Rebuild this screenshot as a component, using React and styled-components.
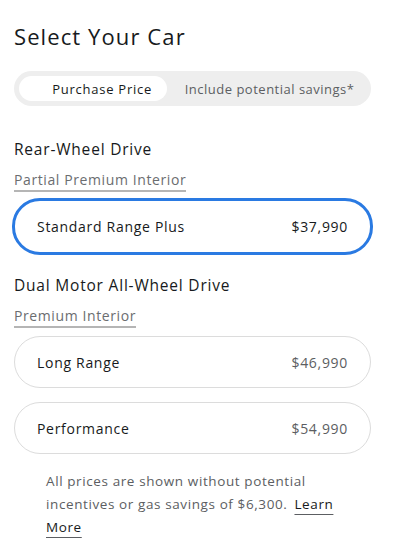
import React from "react";
import styled, { createGlobalStyle } from "styled-components";

const Global = createGlobalStyle`
  html, body { margin: 0; padding: 0; background: #fff; }
  body { font-family: "Open Sans", "Liberation Sans", sans-serif; color: #171a20; -webkit-font-smoothing: antialiased; }
`;

const Page = styled.div`
  width: 400px;
  padding: 20px 14px 0 14px;
  box-sizing: border-box;
  display: flex;
  flex-direction: column;
`;

const Title = styled.h1`
  margin: 0;
  font-size: 22px;
  font-weight: 400;
  line-height: 32px;
  letter-spacing: 1.1px;
  color: #171a20;
`;

const Toggle = styled.div`
  margin-top: 19px;
  width: 357px;
  height: 35px;
  box-sizing: border-box;
  padding: 5px;
  border-radius: 18px;
  background: #eeeeee;
  display: flex;
  align-items: center;
`;

const ToggleOption = styled.div`
  height: 25px;
  border-radius: 13px;
  display: flex;
  align-items: center;
  justify-content: center;
  font-size: 13px;
  letter-spacing: ${(p) => (p.$active ? "0.75px" : "0.5px")};
  white-space: nowrap;
  background: ${(p) => (p.$active ? "#fff" : "transparent")};
  color: ${(p) => (p.$active ? "#171a20" : "#5c5e62")};
  width: ${(p) => p.$w}px;
  padding-left: ${(p) => p.$pl || 0}px;
  box-sizing: border-box;
`;

const Section = styled.section`
  display: flex;
  flex-direction: column;
  align-items: flex-start;
  margin-top: ${(p) => p.$mt}px;
`;

const SectionTitle = styled.h2`
  margin: 0;
  font-size: 15.5px;
  font-weight: 500;
  line-height: 20px;
  letter-spacing: 0.8px;
  color: #171a20;
`;

const SubLink = styled.span`
  margin-top: 12px;
  font-size: 14px;
  line-height: 18px;
  color: #6b6d70;
  letter-spacing: 0.6px;
  border-bottom: 2px solid #b5b5b5;
  padding-bottom: 1px;
`;

const Options = styled.div`
  display: flex;
  flex-direction: column;
  gap: 14px;
  margin-top: ${(p) => p.$mt}px;
  width: 357px;
`;

const Option = styled.div`
  box-sizing: border-box;
  border-radius: 28px;
  border: ${(p) => (p.$selected ? "3px solid #2a7ae2" : "1px solid #dcdcdc")};
  margin: ${(p) => (p.$selected ? "0 -2px" : "0")};
  height: ${(p) => (p.$selected ? "57px" : "52px")};
  padding: 0 22px;
  display: flex;
  align-items: center;
  justify-content: space-between;
  font-size: 14px;
  letter-spacing: 0.7px;
`;

const OptName = styled.span`
  color: #171a20;
`;

const OptPrice = styled.span`
  color: ${(p) => (p.$selected ? "#171a20" : "#5c5e62")};
`;

const Note = styled.p`
  margin: 16px 0 0 32px;
  width: 310px;
  font-size: 13.5px;
  line-height: 23px;
  color: #5c5e62;
  letter-spacing: 0.6px;
`;

const Learn = styled.a`
  color: #171a20;
  margin-left: 7px;
  text-decoration: underline;
  text-decoration-color: #5c5e62;
  text-underline-offset: 5px;
  text-decoration-thickness: 1px;
`;

export default function App() {
  return (
    <>
      <Global />
      <Page>
        <Title>Select Your Car</Title>
        <Toggle>
          <ToggleOption $active $w={149} $pl={18}>Purchase Price</ToggleOption>
          <ToggleOption $w={200} $pl={6}>Include potential savings*</ToggleOption>
        </Toggle>

        <Section $mt={33}>
          <SectionTitle>Rear-Wheel Drive</SectionTitle>
          <SubLink>Partial Premium Interior</SubLink>
        </Section>
        <Options $mt={6}>
          <Option $selected>
            <OptName>Standard Range Plus</OptName>
            <OptPrice $selected>$37,990</OptPrice>
          </Option>
        </Options>

        <Section $mt={20}>
          <SectionTitle>Dual Motor All-Wheel Drive</SectionTitle>
          <SubLink>Premium Interior</SubLink>
        </Section>
        <Options $mt={8}>
          <Option>
            <OptName>Long Range</OptName>
            <OptPrice>$46,990</OptPrice>
          </Option>
          <Option>
            <OptName>Performance</OptName>
            <OptPrice>$54,990</OptPrice>
          </Option>
        </Options>

        <Note>
          All prices are shown without potential incentives or gas savings of $6,300.
          <Learn href="#">Learn More</Learn>
        </Note>
      </Page>
    </>
  );
}
